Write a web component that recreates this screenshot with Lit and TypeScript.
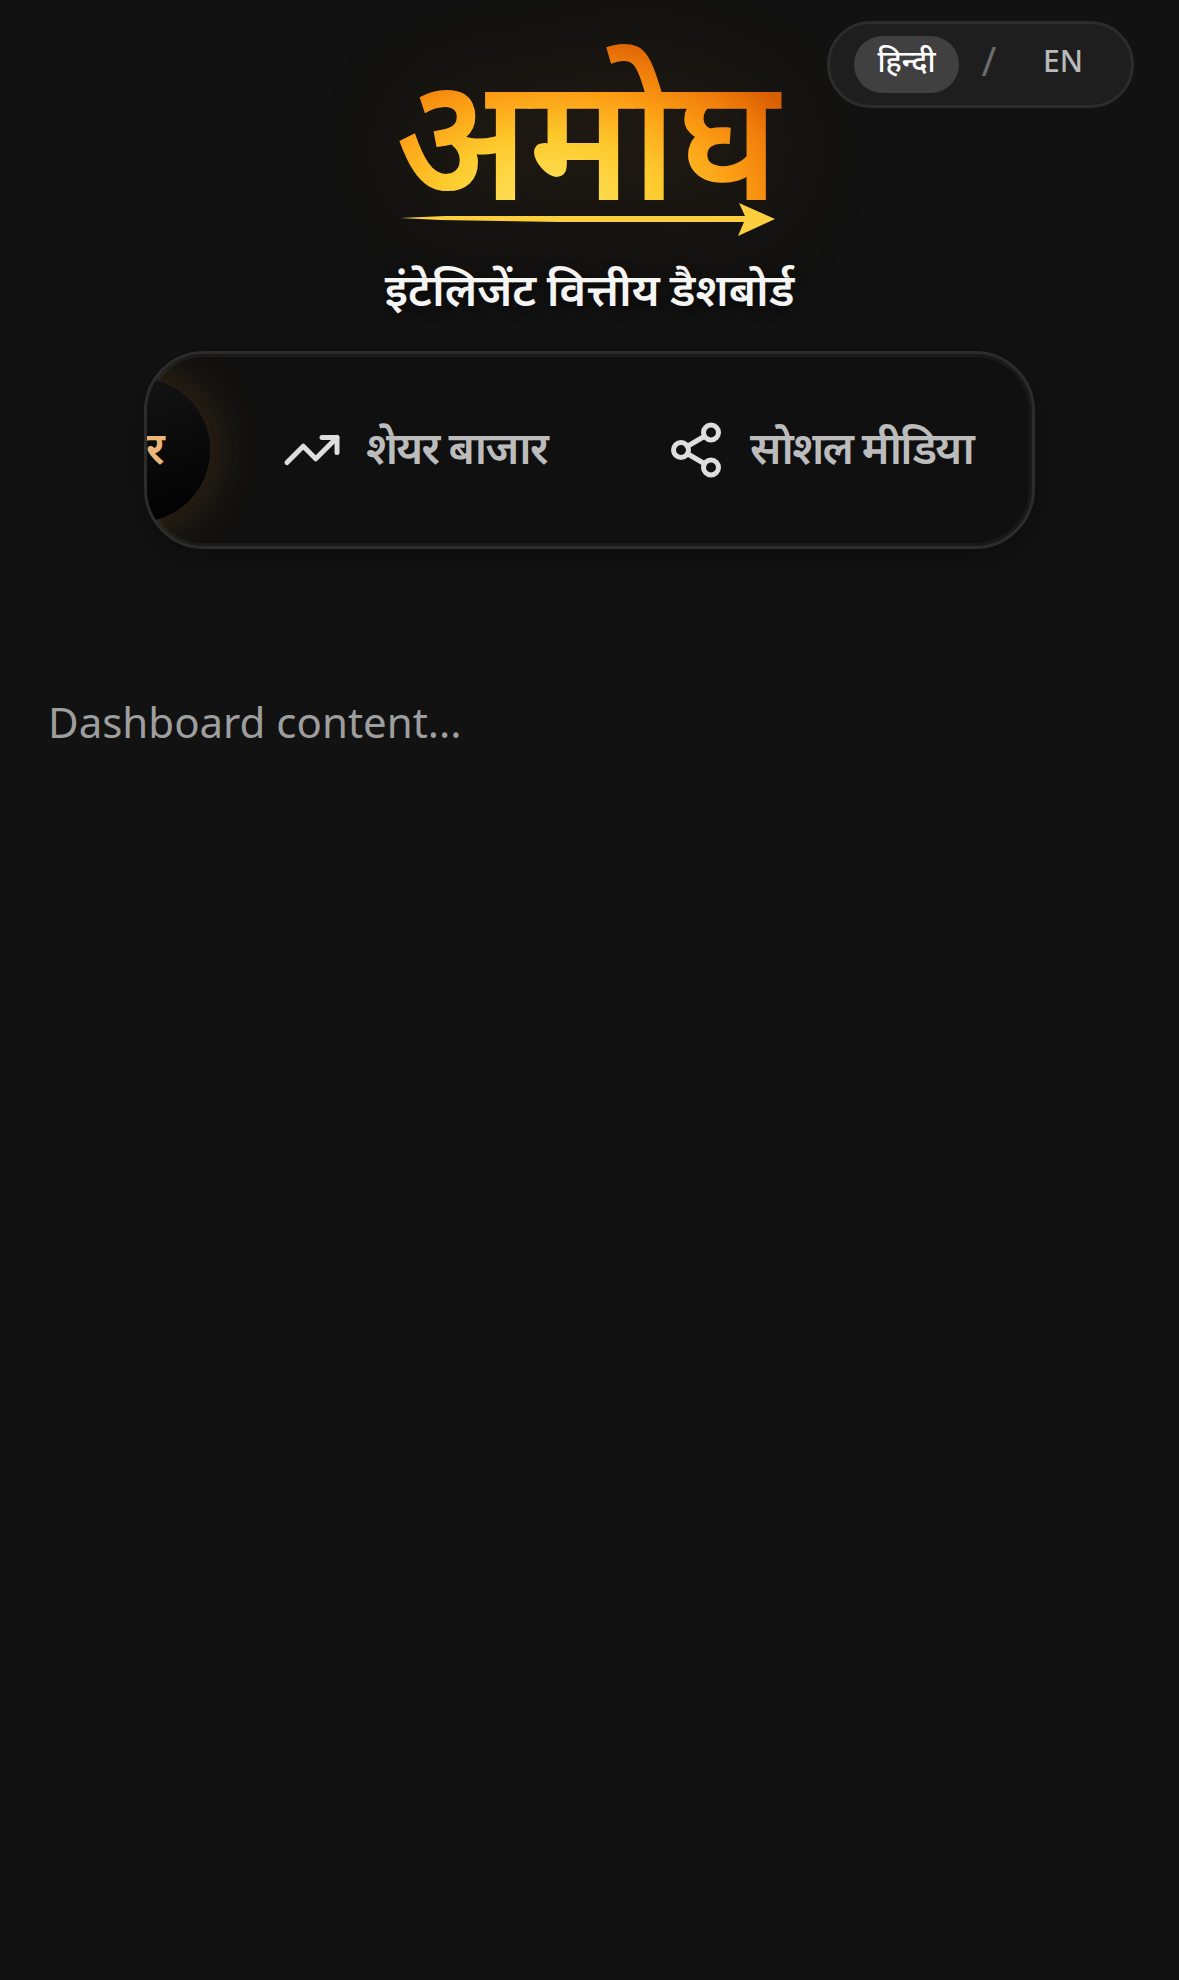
import { LitElement, html, css, svg } from "lit";
import { customElement } from "lit/decorators.js";

@customElement("app-root")
export class AppRoot extends LitElement {
  static styles = css`
    :host {
      display: block;
      height: 1980px;
      background: #121212;
      font-family: "Noto Sans", "Noto Sans Devanagari", sans-serif;
      position: relative;
      overflow: hidden;
    }
    .lang {
      position: absolute;
      top: 21px;
      right: 45px;
      box-sizing: border-box;
      width: 307px;
      height: 87px;
      border: 3px solid #2b2c2c;
      border-radius: 44px;
      background: #1e1e1e;
      display: flex;
      align-items: center;
      padding: 0 24px;
      font-size: 30px;
      color: #b9babb;
    }
    .chip {
      width: 105px;
      height: 57px;
      line-height: 50px;
      border-radius: 29px;
      background: #404040;
      color: #fff;
      text-align: center;
      font-weight: 500;
    }
    .slash {
      width: 60px;
      text-align: center;
      color: #6b6b6b;
      font-size: 40px;
      padding-bottom: 8px;
    }
    .en {
      flex: 1;
      text-align: center;
      font-weight: 500;
      padding-bottom: 8px;
    }
    header {
      display: flex;
      flex-direction: column;
      align-items: center;
    }
    .logo {
      display: block;
      width: 420px;
      height: 240px;
      margin-top: 10px;
      overflow: visible;
      filter: drop-shadow(0 0 56px rgba(255, 152, 0, 0.12));
    }
    .word {
      font-weight: 600;
    }
    h1 {
      margin: 0;
      height: 101px;
      line-height: 76px;
      font-size: 45.6px;
      font-weight: 600;
      word-spacing: -1.5px;
      color: #f5f5f5;
      text-shadow: 0 6px 12px rgba(0, 0, 0, 0.5);
      white-space: nowrap;
    }
    nav {
      box-sizing: border-box;
      width: 891px;
      height: 198px;
      margin: 0 auto;
      padding: 24px 12px;
      border: 3px solid #2c2c2c;
      border-radius: 60px;
      background: #101010;
      box-shadow: inset 0 0 0 3px #1a1a1a, 0 9px 30px rgba(0, 0, 0, 0.3);
      overflow: hidden;
      display: flex;
      gap: 24px;
      align-items: center;
      justify-content: flex-end;
    }
    .item {
      flex: none;
      display: flex;
      align-items: center;
      gap: 24px;
      height: 144px;
      box-sizing: border-box;
      padding: 0 47px 0 48px;
      font-size: 44px;
      font-weight: 600;
      letter-spacing: -1.75px;
      color: #bcbcbc;
      border-radius: 72px;
      white-space: nowrap;
    }
    .item span {
      padding-bottom: 7px;
    }
    .item svg {
      width: 60px;
      height: 60px;
      color: #dedede;
    }
    .active {
      color: #eab67a;
      background: linear-gradient(160deg, #1a1a1a, #000);
      box-shadow: 0 0 60px rgba(255, 167, 38, 0.2);
    }
    p {
      margin: 0;
      padding: 137px 48px 0;
      font-size: 42px;
      line-height: 72px;
      color: #9e9e9e;
    }
  `;

  icon(body: unknown) {
    return html`<svg viewBox="0 0 24 24" fill="none" stroke="currentColor" stroke-width="2"
      stroke-linecap="round" stroke-linejoin="round">${body}</svg>`;
  }

  render() {
    return html`
      <header>
        <svg class="logo" viewBox="0 0 420 240">
          <defs>
            <radialGradient id="g" gradientUnits="userSpaceOnUse" cx="0" cy="0" r="290"
              gradientTransform="translate(170 200) scale(1 0.625)">
              <stop offset="0" stop-color="#ffe765" />
              <stop offset="0.4" stop-color="#fdca2d" />
              <stop offset="0.66" stop-color="#fc9d14" />
              <stop offset="0.84" stop-color="#ef7c0a" />
              <stop offset="1" stop-color="#d85c02" />
            </radialGradient>
          </defs>
          <text class="word" x="15" y="190" font-size="174" textLength="384" lengthAdjust="spacingAndGlyphs" fill="url(#g)">अमोघ</text>
          <path d="M20 208 L65 206 H365 L359 193 L395 209 L358 226 L364 212 H180 L60 210 Z" fill="#fdcf3e" />
        </svg>
        <h1>इंटेलिजेंट वित्तीय डैशबोर्ड</h1>
      </header>
      <div class="lang">
        <span class="chip">हिन्दी</span><span class="slash">/</span><span class="en">EN</span>
      </div>
      <nav>
        <div class="item active"><span>समाचार</span></div>
        <div class="item">
          ${this.icon(svg`<path d="M22 7 13.5 15.5 8.5 10.5 2 17" /><path d="M16 7h6v6" />`)}
          <span>शेयर बाजार</span>
        </div>
        <div class="item">
          ${this.icon(svg`<circle cx="18" cy="5" r="3" /><circle cx="6" cy="12" r="3" /><circle cx="18" cy="19" r="3" /><path d="m8.59 13.51 6.83 3.98M15.41 6.51l-6.82 3.98" />`)}
          <span>सोशल मीडिया</span>
        </div>
      </nav>
      <p>Dashboard content...</p>
    `;
  }
}
